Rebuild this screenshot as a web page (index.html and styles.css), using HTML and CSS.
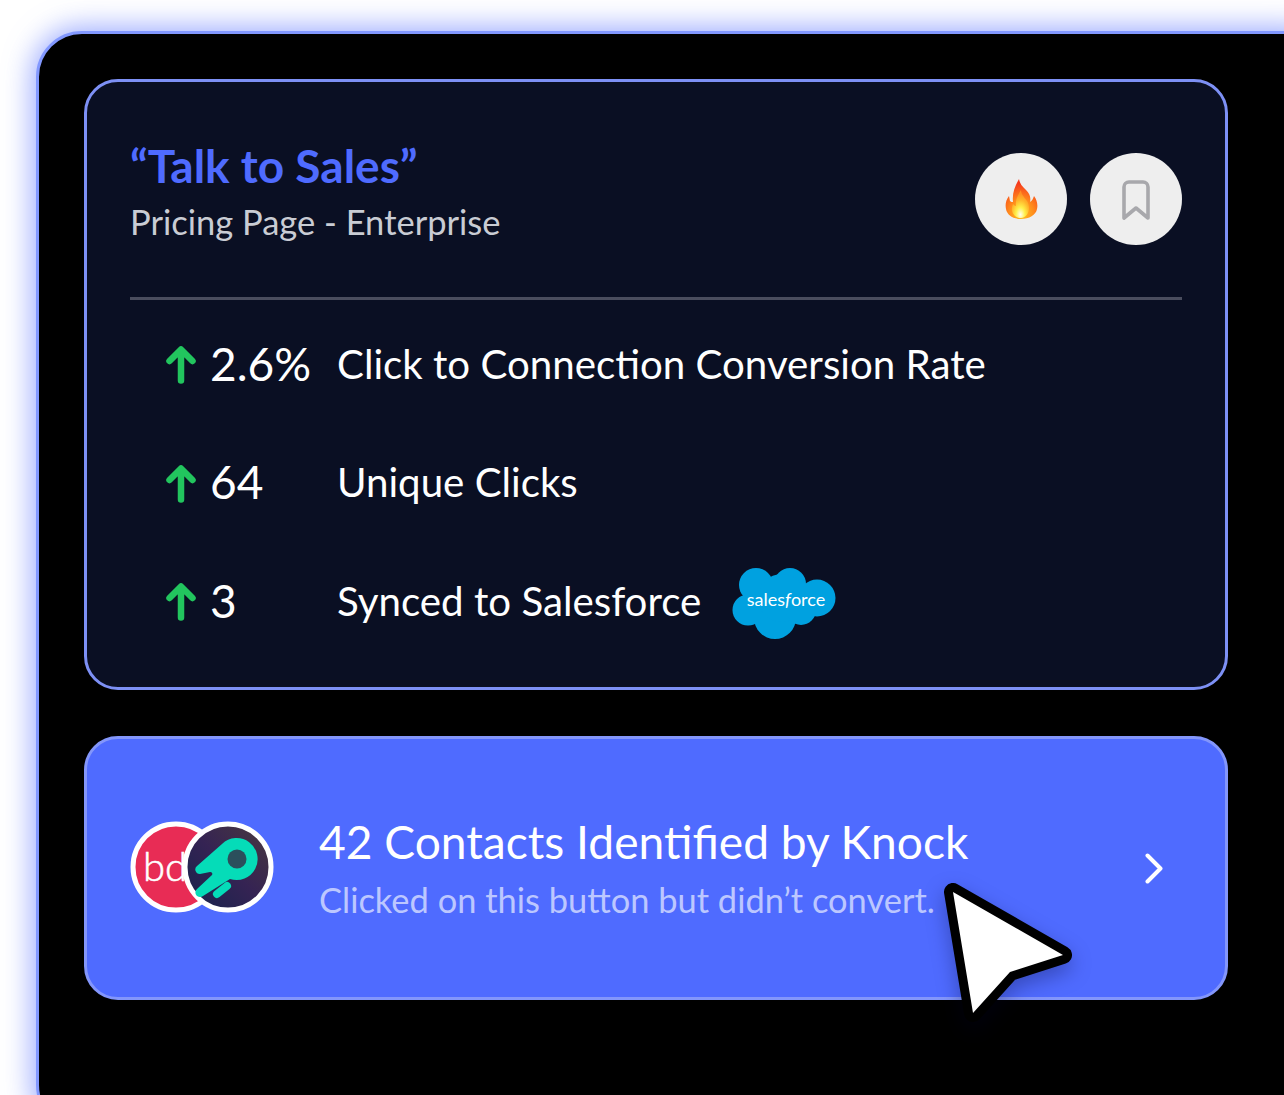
FILE: index.html
```html
<!DOCTYPE html>
<html lang="en">
<head>
    <meta charset="UTF-8">
    <title>Talk to Sales</title>
    <link rel="stylesheet" href="styles.css">
</head>
<body>
    <div class="frame">
        <div class="stats-card">
            <div class="stats-head">
                <div>
                    <h1 class="title">“Talk to Sales”</h1>
                    <p class="subtitle">Pricing Page - Enterprise</p>
                </div>
                <div class="actions">
                    <span class="round-btn">
                        <svg width="34" height="40" viewBox="0 0 34 40">
                            <defs>
                                <radialGradient id="flame" cx="50%" cy="90%" r="80%">
                                    <stop offset="0" stop-color="#ffc21f"/>
                                    <stop offset="0.5" stop-color="#ff8a1c"/>
                                    <stop offset="1" stop-color="#f5391c"/>
                                </radialGradient>
                                <radialGradient id="flame-core" cx="50%" cy="88%" r="75%">
                                    <stop offset="0" stop-color="#fffef0"/>
                                    <stop offset="0.35" stop-color="#fff04a"/>
                                    <stop offset="0.7" stop-color="#ffb52a"/>
                                    <stop offset="1" stop-color="#ff8f22"/>
                                </radialGradient>
                            </defs>
                            <path fill="url(#flame)" d="M15 0c1 5 3 7 7 11 4 4 5 8 4 12 2-1 3-3 4-6 3 4 4 9 3 13-1 6-8 10-16 10S3 36 2 30c-1-5 0-9 3-13l1 5c1 1 2 1 3 1C8 14 11 7 15 0z"/>
                            <path fill="url(#flame-core)" d="M17 11c0 4 3 7 6 11 4 6 2 17-6 17S6 31 9 25c1 1 2 2 3 2-1-6 2-11 5-16z"/>
                        </svg>
                    </span>
                    <span class="round-btn">
                        <svg class="bookmark" width="28" height="40" viewBox="0 0 28 40" fill="none" stroke="#a8a8ac" stroke-width="3.6" stroke-linejoin="round">
                            <path d="M2 7a5 5 0 0 1 5-5h14a5 5 0 0 1 5 5v31l-12-10-12 10z"/>
                        </svg>
                    </span>
                </div>
            </div>
            <div class="divider"></div>
            <div class="stat-rows">
                <div class="stat-row">
                    <svg class="arrow" viewBox="0 0 30 38" fill="none" stroke="#22c55e" stroke-width="6.5" stroke-linecap="round" stroke-linejoin="round"><path d="M15 34.500V4M3.500 15 15 3.500 26.500 15"/></svg>
                    <span class="stat-num">2.6%</span>
                    <span class="stat-label">Click to Connection Conversion Rate</span>
                </div>
                <div class="stat-row">
                    <svg class="arrow" viewBox="0 0 30 38" fill="none" stroke="#22c55e" stroke-width="6.5" stroke-linecap="round" stroke-linejoin="round"><path d="M15 34.500V4M3.500 15 15 3.500 26.500 15"/></svg>
                    <span class="stat-num">64</span>
                    <span class="stat-label">Unique Clicks</span>
                </div>
                <div class="stat-row">
                    <svg class="arrow" viewBox="0 0 30 38" fill="none" stroke="#22c55e" stroke-width="6.5" stroke-linecap="round" stroke-linejoin="round"><path d="M15 34.500V4M3.500 15 15 3.500 26.500 15"/></svg>
                    <span class="stat-num">3</span>
                    <span class="stat-label">Synced to Salesforce</span>
                    <svg class="sf-logo" width="104" height="72" viewBox="0 0 104 72">
                        <g fill="#00a1e0">
                            <circle cx="24" cy="17" r="17"/>
                            <circle cx="58" cy="16" r="16"/>
                            <circle cx="85" cy="30" r="18.500"/>
                            <circle cx="43" cy="50" r="21"/>
                            <circle cx="16" cy="42" r="15.500"/>
                            <circle cx="50" cy="30" r="24"/>
                            <circle cx="69" cy="42" r="15"/>
                        </g>
                        <text class="sf-text" x="54" y="38" text-anchor="middle">sales<tspan font-style="italic">f</tspan>orce</text>
                    </svg>
                </div>
            </div>
        </div>

        <div class="contacts-card">
            <div class="logos">
                <svg class="logo" width="144" height="92" viewBox="0 0 144 92">
                    <defs>
                        <linearGradient id="dark" x1="0" y1="1" x2="1" y2="0">
                            <stop offset="0" stop-color="#14234c"/>
                            <stop offset="0.5" stop-color="#352353"/>
                            <stop offset="1" stop-color="#4a3a3e"/>
                        </linearGradient>
                    </defs>
                    <circle cx="46" cy="46" r="43" fill="#e82c55" stroke="#fff" stroke-width="5"/>
                    <text class="bd-text" x="13" y="60">bd</text>
                    <circle cx="98" cy="46" r="43" fill="url(#dark)" stroke="#fff" stroke-width="5"/>
                    <path fill="#05dcb8" d="M92 23 67 45a4.500 4.500 0 0 0 3 8l10-2a2 2 0 0 1 2 3L67 68a4.500 4.500 0 0 0 6 7l27-17A21 21 0 1 0 92 23z"/>
                    <path d="M87 73 97 65" stroke="#05dcb8" stroke-width="8" stroke-linecap="round"/>
                    <circle cx="107" cy="38" r="9.500" fill="#2b4f5c"/>
                </svg>
            </div>
            <div class="contacts-text">
                <p class="contacts-title">42 Contacts Identified by Knock</p>
                <p class="contacts-sub">Clicked on this button but didn’t convert.</p>
            </div>
            <svg class="chevron" width="18" height="31" viewBox="0 0 18 31" fill="none" stroke="#fff" stroke-width="4" stroke-linecap="round" stroke-linejoin="round"><path d="M2.500 2.500 15.500 15.500 2.500 28.500"/></svg>
        </div>

        <svg class="cursor" width="150" height="160" viewBox="0 0 150 160">
            <path d="M19 19 129 82 76 99 39 140z" fill="#fff" stroke="#000" stroke-width="18" stroke-linejoin="round" paint-order="stroke"/>
        </svg>
    </div>
</body>
</html>
```

FILE: styles.css
```css
html, body {
    margin: 0;
    height: 100%;
    overflow: hidden;
}

body {
    background-color: #fff;
    font-family: Lato, "Open Sans", sans-serif;
    padding: 31px 0 0 36px;
    box-sizing: border-box;
}

.frame {
    position: relative;
    box-sizing: border-box;
    width: 1300px;
    height: 1100px;
    padding: 45px 0 0 45px;
    background-color: #000;
    border: 3px solid #8298ff;
    border-radius: 46px;
    box-shadow: 0 0 28px 4px rgba(90, 115, 255, 0.6);
}

.stats-card {
    box-sizing: border-box;
    width: 1144px;
    height: 611px;
    padding: 56px 43px 0 43px;
    background-color: #0a0f23;
    border: 3px solid #7d90f5;
    border-radius: 34px;
}

.stats-head {
    display: flex;
    justify-content: space-between;
    height: 159px;
}

.title {
    margin: 0;
    font-size: 46px;
    line-height: 56px;
    font-weight: 700;
    color: #4f6bff;
}

.subtitle {
    margin: 7px 0 0;
    font-size: 34.5px;
    line-height: 42px;
    color: #c9ccd4;
}

.actions {
    display: flex;
    gap: 23px;
    margin-top: 15px;
}

.round-btn {
    display: flex;
    align-items: center;
    justify-content: center;
    width: 92px;
    height: 92px;
    border-radius: 50%;
    background-color: #eee;
}

.bookmark {
    margin-top: 2px;
}

.divider {
    height: 3px;
    background-color: #4a4d5e;
}

.stat-rows {
    padding-top: 4px;
}

.stat-row {
    display: flex;
    align-items: center;
    height: 118.5px;
    padding-left: 36px;
    color: #fff;
}

.arrow {
    width: 30px;
    height: 38px;
    margin-top: 4px;
    flex-shrink: 0;
}

.stat-num {
    width: 127px;
    margin-left: 14px;
    font-size: 46px;
    flex-shrink: 0;
}

.stat-label {
    font-size: 40.25px;
}

.sf-logo {
    margin: 8px 0 0 31px;
}

.sf-text {
    font-family: Lato, sans-serif;
    font-size: 18px;
    fill: #fff;
}

.contacts-card {
    display: flex;
    align-items: center;
    box-sizing: border-box;
    width: 1144px;
    height: 264px;
    margin-top: 46px;
    padding: 0 62px 0 43px;
    background-color: #4f6bff;
    border: 3px solid #8396fb;
    border-radius: 34px;
}

.logos {
    width: 144px;
    height: 92px;
    margin-bottom: 2px;
    flex-shrink: 0;
}

.bd-text {
    font-family: Lato, sans-serif;
    font-size: 40px;
    font-weight: 300;
    fill: #fff;
    stroke: #fff;
    stroke-width: 0.6;
}

.contacts-text {
    flex: 1;
    margin-left: 45px;
    padding-bottom: 3px;
}

.contacts-title {
    margin: 0;
    font-size: 46.15px;
    line-height: 58px;
    color: #fff;
}

.contacts-sub {
    margin: 9px 0 0;
    font-size: 34.45px;
    line-height: 42px;
    color: #bcc7ff;
}

.cursor {
    position: absolute;
    left: 895px;
    top: 839px;
    filter: drop-shadow(0 8px 10px rgba(0, 0, 40, 0.3));
}
```
